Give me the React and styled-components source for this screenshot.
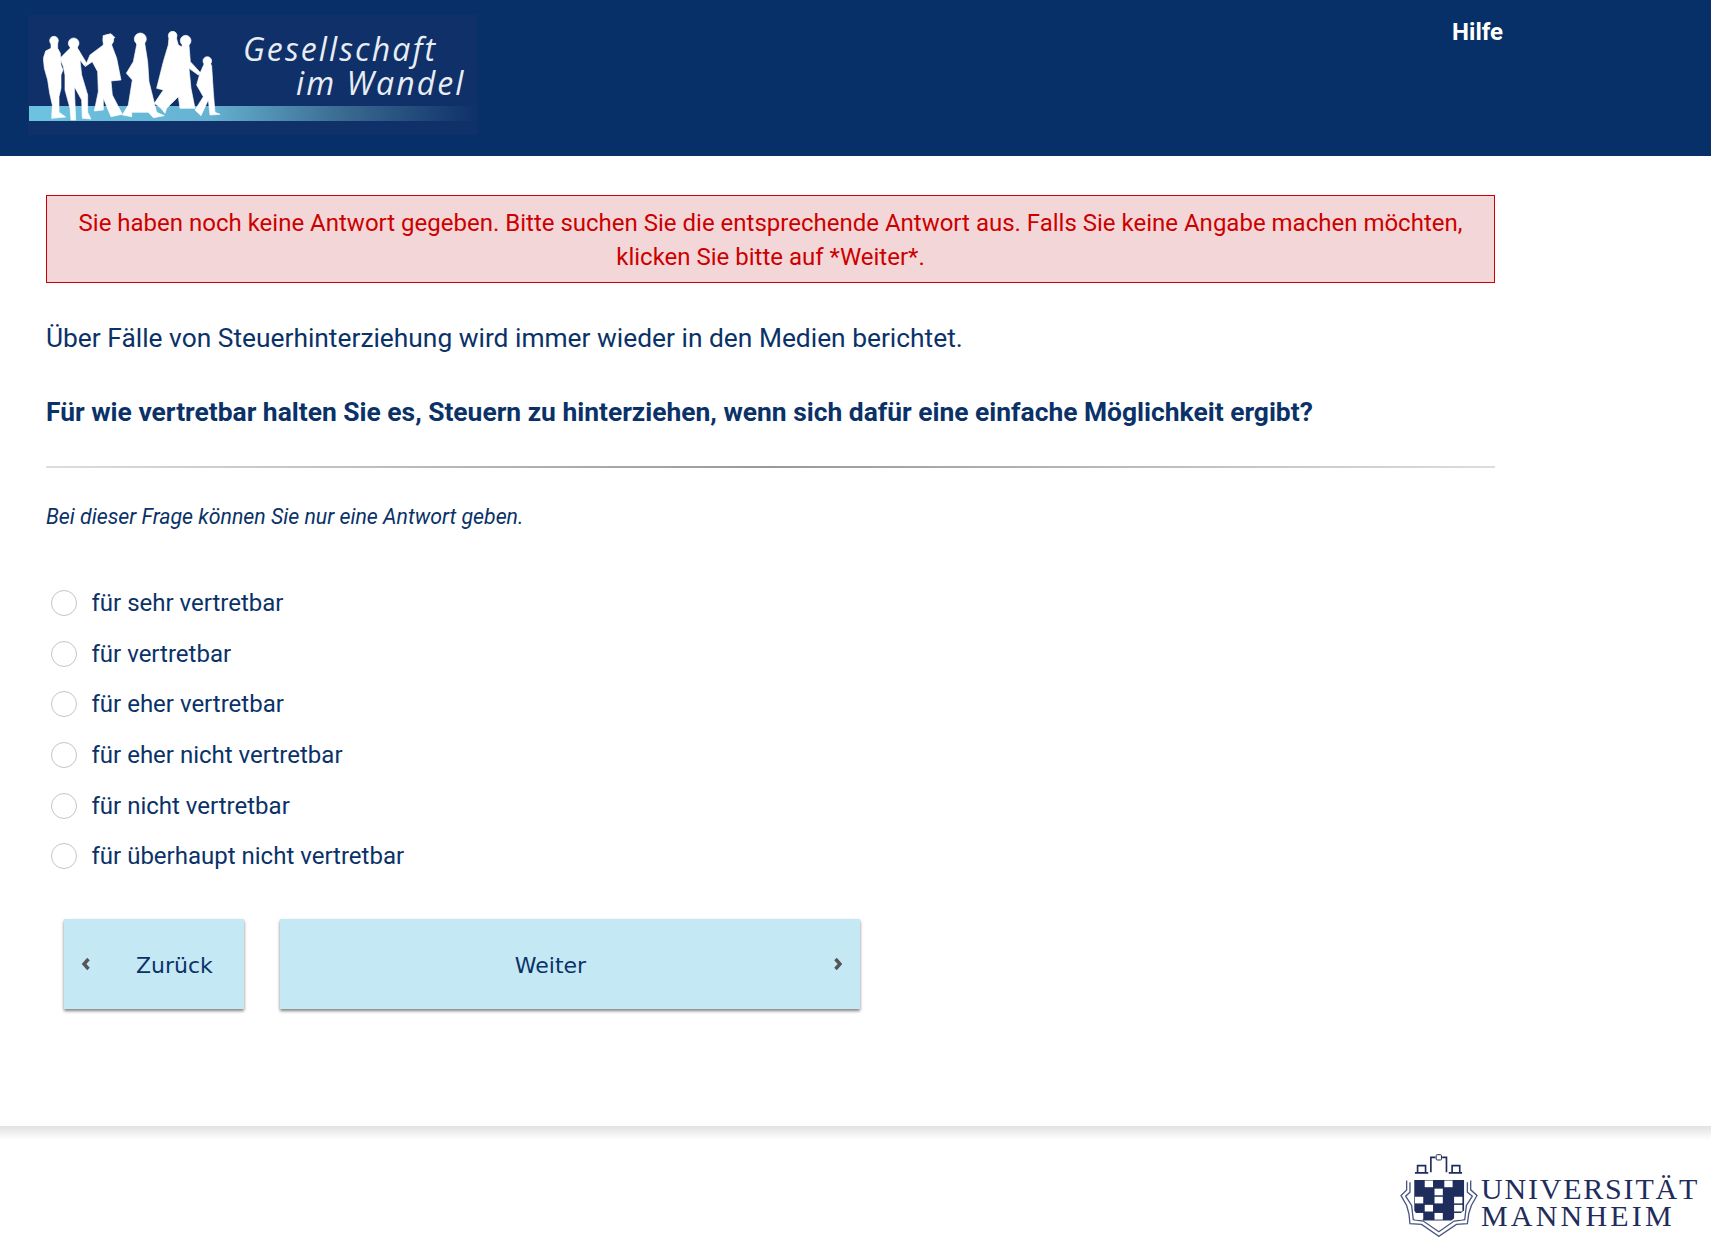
import React from "react";
import styled, { createGlobalStyle } from "styled-components";

const options = [
  "für sehr vertretbar",
  "für vertretbar",
  "für eher vertretbar",
  "für eher nicht vertretbar",
  "für nicht vertretbar",
  "für überhaupt nicht vertretbar",
];

const crestCells = [
  "10101",
  "11011",
  "01010",
  "10110",
  "01010",
];

function ProjectLogo() {
  return (
    <LogoSvg viewBox="0 0 500 156">
      <defs>
        <linearGradient id="bar" x1="0" x2="1" y1="0" y2="0">
          <stop offset="0" stopColor="#6cc3e0" />
          <stop offset="0.4" stopColor="#66b2d2" />
          <stop offset="0.7" stopColor="#3a6a90" />
          <stop offset="1" stopColor="#0e3069" />
        </linearGradient>
      </defs>
      <rect x="28" y="15" width="450" height="120" fill="#0f3069" />
      <rect x="29" y="106" width="449" height="15" fill="url(#bar)" />
      <People transform="translate(35 25) scale(0.3333)">
        <circle cx="57" cy="47" r="13" />
        <path d="M48 54 L68 54 L68 70 L76 85 L78 120 L84 135 L78 150 L78 190 L72 215 L72 262 L92 276 L50 280 L52 240 L44 205 L38 165 L28 130 L25 100 L32 78 L48 70 Z" />
        <circle cx="116" cy="55" r="16" />
        <path d="M108 62 L126 62 L128 70 L140 90 L155 115 L148 122 L135 105 L140 150 L158 210 L158 262 L168 282 L142 280 L140 225 L118 185 L122 285 L108 285 L105 250 L90 195 L90 150 L85 125 L75 100 L105 70 Z" />
        <circle cx="220" cy="45" r="16" />
        <path d="M204 32 L228 26 L240 38 L232 42 L230 60 L245 100 L258 165 L228 168 L232 210 L262 268 L228 275 L205 220 L205 255 L178 258 L190 200 L188 140 L172 110 L150 125 L165 90 L205 60 Z" />
        <circle cx="316" cy="42" r="18" />
        <path d="M306 50 L328 50 L330 60 L338 110 L342 170 L365 262 L388 272 L355 278 L340 262 L290 262 L290 275 L262 270 L280 240 L292 165 L274 145 L295 110 L305 60 Z" />
        <circle cx="413" cy="32" r="13" />
        <circle cx="452" cy="47" r="16" />
        <path d="M402 38 L424 38 L430 60 L440 65 L444 55 L462 55 L462 60 L466 110 L498 145 L490 150 L462 130 L468 190 L480 250 L435 250 L430 215 L395 250 L390 265 L378 250 L358 235 L385 195 L365 190 L385 110 L400 60 Z" />
        <circle cx="517" cy="108" r="13" />
        <path d="M508 115 L526 115 L530 122 L533 170 L535 200 L540 262 L555 268 L525 270 L520 225 L498 272 L480 255 L505 215 L485 180 L495 145 L505 122 Z" />
      </People>
      <LogoText x="243" y="61">Gesellschaft</LogoText>
      <LogoText x="296" y="95">im Wandel</LogoText>
    </LogoSvg>
  );
}

function Crest() {
  return (
    <CrestSvg viewBox="65 130 235 250">
      <g fill="none" stroke="#4a5680" strokeWidth="4">
        <path d="M85 210 V238 L68 255 L85 285 L92 310 L95 340 L130 342 L182 378 L235 342 L268 340 L272 310 L280 285 L297 255 L278 238 V210" />
        <path d="M95 215 V245 L82 257 L100 285 L105 328 L135 332 L182 364 L228 332 L260 328 L265 285 L283 257 L268 245 V215" />
      </g>
      <g fill="none" stroke="#1f2d5c" strokeWidth="5">
        <path d="M110 187 H150 M118 187 V165 H142 V187 M158 185 V140 H172 M192 140 H205 V185 M212 187 H252 M222 187 V165 H245 V187" />
        <rect x="174" y="132" width="16" height="16" rx="3" strokeWidth="3" />
      </g>
      <path d="M108 208 H258 V300 L220 330 H135 L118 316 L108 300 Z" fill="#1f2d5c" />
      {crestCells.map((row, r) =>
        row.split("").map((cell, c) =>
          cell === "0" ? (
            <rect key={`${r}-${c}`} x={110 + c * 29.5} y={210 + r * 24.4} width="25" height="20" fill="#fff" />
          ) : null
        )
      )}
    </CrestSvg>
  );
}

export default function App() {
  return (
    <>
      <GlobalStyle />
      <Header>
        <ProjectLogo />
        <HelpLink>Hilfe</HelpLink>
      </Header>
      <Main>
        <Alert>
          Sie haben noch keine Antwort gegeben. Bitte suchen Sie die entsprechende Antwort aus. Falls Sie keine Angabe machen möchten, klicken Sie bitte auf *Weiter*.
        </Alert>
        <Intro>Über Fälle von Steuerhinterziehung wird immer wieder in den Medien berichtet.</Intro>
        <Question>Für wie vertretbar halten Sie es, Steuern zu hinterziehen, wenn sich dafür eine einfache Möglichkeit ergibt?</Question>
        <Divider />
        <Hint>Bei dieser Frage können Sie nur eine Antwort geben.</Hint>
        <OptionList>
          {options.map((label) => (
            <Option key={label}>
              <Radio type="radio" name="answer" />
              {label}
            </Option>
          ))}
        </OptionList>
        <ButtonRow>
          <NavButton $width={180}>
            <Chevron viewBox="0 0 10 14"><path d="M7.5 2 L3 7 L7.5 12" /></Chevron>
            <BackLabel>Zurück</BackLabel>
          </NavButton>
          <NavButton $width={580}>
            <NextLabel>Weiter</NextLabel>
            <Chevron viewBox="0 0 10 14"><path d="M2.5 2 L7 7 L2.5 12" /></Chevron>
          </NavButton>
        </ButtonRow>
      </Main>
      <FooterShade />
      <Footer>
        <UniLogo>
          <Crest />
          <UniName>
            <UniLine $spacing={1.8}>UNIVERSITÄT</UniLine>
            <UniLine $spacing={3.2}>MANNHEIM</UniLine>
          </UniName>
        </UniLogo>
      </Footer>
    </>
  );
}

const GlobalStyle = createGlobalStyle`
  html, body {
    margin: 0;
    padding: 0;
    background: #fff;
    font-family: Roboto, "Liberation Sans", sans-serif;
    color: #0a3268;
  }
`;

const Header = styled.header`
  height: 156px;
  background: #083068;
  display: flex;
  justify-content: space-between;
  align-items: flex-start;
  padding-right: 208px;
`;

const LogoSvg = styled.svg`
  width: 500px;
  height: 156px;
  display: block;
`;

const People = styled.g`
  fill: #fff;
  stroke: #fff;
  stroke-width: 2;
  stroke-linejoin: round;
  filter: blur(0.4px);
`;

const LogoText = styled.text`
  font-family: "Open Sans", sans-serif;
  font-style: italic;
  font-size: 32px;
  letter-spacing: 2.1px;
  fill: #e8edf4;
`;

const HelpLink = styled.div`
  margin-top: 18px;
  font-size: 24px;
  line-height: 28px;
  font-weight: 700;
  color: #fff;
`;

const Main = styled.main`
  width: 1449px;
  margin-left: 46px;
  padding-top: 39px;
  height: 970px;
  box-sizing: border-box;
`;

const Alert = styled.div`
  border: 1px solid #cc0000;
  background: #f3d7d8;
  color: #cc0000;
  text-align: center;
  font-size: 24px;
  line-height: 34px;
  padding: 10px 20px 9px;
  box-sizing: border-box;
  height: 88px;
`;

const Intro = styled.p`
  margin: 38px 0 0;
  font-size: 26.35px;
  line-height: 34px;
`;

const Question = styled.p`
  margin: 40px 0 0;
  font-size: 26.4px;
  line-height: 34px;
  font-weight: 700;
`;

const Divider = styled.hr`
  margin: 37px 0 0;
  border: 0;
  height: 2px;
  background: linear-gradient(to right, #ddd, #999 50%, #ddd);
`;

const Hint = styled.p`
  margin: 36px 0 0;
  font-size: 21.3px;
  line-height: 26px;
  font-style: italic;
`;

const OptionList = styled.div`
  margin-top: 48px;
  display: flex;
  flex-direction: column;
`;

const Option = styled.label`
  height: 50.6px;
  display: flex;
  align-items: center;
  gap: 14.5px;
  padding-left: 5px;
  font-size: 24px;
`;

const Radio = styled.input`
  appearance: none;
  margin: 0;
  width: 26px;
  height: 26px;
  border: 1px solid #c4c4c4;
  border-radius: 50%;
  background: #fff;
`;

const ButtonRow = styled.div`
  margin: 37px 0 0 18px;
  display: flex;
  gap: 36px;
`;

const NavButton = styled.div`
  width: ${(p) => p.$width}px;
  height: 90px;
  background: #c5e8f5;
  box-shadow: 0 2px 3px rgba(0, 0, 0, 0.5);
  display: flex;
  align-items: center;
  padding: 0 16px;
  box-sizing: border-box;
  font-family: "DejaVu Sans", sans-serif;
  font-size: 22px;
`;

const Chevron = styled.svg`
  width: 12px;
  height: 14px;
  flex: none;
  fill: none;
  stroke: #555;
  stroke-width: 3.4;
`;

const BackLabel = styled.span`
  margin-left: 44px;
  padding-top: 3px;
`;

const NextLabel = styled.span`
  flex: 1;
  text-align: center;
  padding: 3px 27px 0 0;
`;

const FooterShade = styled.div`
  height: 14px;
  background: linear-gradient(to bottom, #e2e2e2, #fff);
`;

const Footer = styled.footer`
  display: flex;
  justify-content: flex-end;
  padding: 14px 11px 0 0;
`;

const UniLogo = styled.div`
  display: flex;
  align-items: flex-end;
  gap: 3px;
`;

const CrestSvg = styled.svg`
  width: 78px;
  height: 83px;
  display: block;
`;

const UniName = styled.div`
  display: flex;
  flex-direction: column;
  width: 219px;
  font-family: "Liberation Serif", serif;
  font-size: 30px;
  line-height: 27px;
  color: #1f2d5c;
  padding-bottom: 8px;
`;

const UniLine = styled.span`
  letter-spacing: ${(p) => p.$spacing}px;
  white-space: nowrap;
`;
